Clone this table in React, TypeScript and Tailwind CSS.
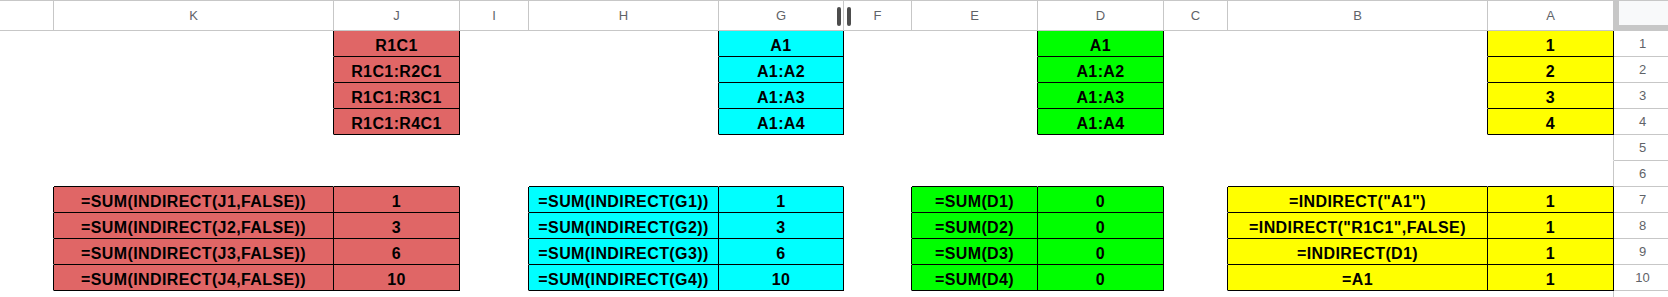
import React from "react";

type Fill = "red" | "cyan" | "green" | "yellow";

const COLS = ["L", "K", "J", "I", "H", "G", "F", "E", "D", "C", "B", "A"];

const FILL_CLASS: Record<Fill, string> = {
  red: "bg-[#e06666]",
  cyan: "bg-[#00ffff]",
  green: "bg-[#00ff00]",
  yellow: "bg-[#ffff00]",
};

const blocks: { col: string; start: number; fill: Fill; values: string[] }[] = [
  { col: "J", start: 1, fill: "red", values: ["R1C1", "R1C1:R2C1", "R1C1:R3C1", "R1C1:R4C1"] },
  { col: "G", start: 1, fill: "cyan", values: ["A1", "A1:A2", "A1:A3", "A1:A4"] },
  { col: "D", start: 1, fill: "green", values: ["A1", "A1:A2", "A1:A3", "A1:A4"] },
  { col: "A", start: 1, fill: "yellow", values: ["1", "2", "3", "4"] },
  {
    col: "K",
    start: 7,
    fill: "red",
    values: [
      "=SUM(INDIRECT(J1,FALSE))",
      "=SUM(INDIRECT(J2,FALSE))",
      "=SUM(INDIRECT(J3,FALSE))",
      "=SUM(INDIRECT(J4,FALSE))",
    ],
  },
  { col: "J", start: 7, fill: "red", values: ["1", "3", "6", "10"] },
  {
    col: "H",
    start: 7,
    fill: "cyan",
    values: ["=SUM(INDIRECT(G1))", "=SUM(INDIRECT(G2))", "=SUM(INDIRECT(G3))", "=SUM(INDIRECT(G4))"],
  },
  { col: "G", start: 7, fill: "cyan", values: ["1", "3", "6", "10"] },
  { col: "E", start: 7, fill: "green", values: ["=SUM(D1)", "=SUM(D2)", "=SUM(D3)", "=SUM(D4)"] },
  { col: "D", start: 7, fill: "green", values: ["0", "0", "0", "0"] },
  {
    col: "B",
    start: 7,
    fill: "yellow",
    values: ['=INDIRECT("A1")', '=INDIRECT("R1C1",FALSE)', "=INDIRECT(D1)", "=A1"],
  },
  { col: "A", start: 7, fill: "yellow", values: ["1", "1", "1", "1"] },
];

const cells = new Map<string, { text: string; fill: Fill }>();
blocks.forEach((b) =>
  b.values.forEach((text, i) => cells.set(`${b.col}${b.start + i}`, { text, fill: b.fill }))
);

const boxed = (col: string | undefined, row: number) => !!col && cells.has(`${col}${row}`);

const ROWS = Array.from({ length: 11 }, (_, i) => i + 1);

function HeaderCell({ col }: { col: string }) {
  return (
    <div className="relative h-[31px] border-t border-b border-r border-[#c7c7c7] bg-white flex items-center justify-center text-[13px] text-[#5f6368]">
      {col === "L" ? "" : col}
      {col === "G" && (
        <div className="absolute left-[118px] top-[6px] z-10 flex gap-[6px]">
          <div className="w-[4px] h-[19px] rounded-full bg-[#4d4d4d]" />
          <div className="w-[4px] h-[19px] rounded-full bg-[#4d4d4d]" />
        </div>
      )}
    </div>
  );
}

function Cell({ col, idx, row }: { col: string; idx: number; row: number }) {
  const data = cells.get(`${col}${row}`);
  const self = !!data;
  const right = COLS[idx + 1];
  const rightLine =
    self || boxed(right, row) ? "border-r-black" : idx === COLS.length - 1 ? "border-r-[#c7c7c7]" : "border-r-white";
  const bottomLine = self || boxed(col, row + 1) ? "border-b-black" : "border-b-white";
  return (
    <div
      className={`h-[26px] border-r border-b ${rightLine} ${bottomLine} ${
        data ? FILL_CLASS[data.fill] : "bg-white"
      } flex items-end justify-center overflow-hidden whitespace-nowrap pb-[1px] text-[16px] leading-[18px] font-bold tracking-[0.4px] text-black`}
    >
      {data?.text}
    </div>
  );
}

export default function App() {
  return (
    <div className="h-[297px] w-full overflow-hidden bg-white font-['Liberation_Sans',Arial,sans-serif]">
      <div className="grid w-max grid-cols-[54px_280px_126px_69px_190px_125px_68px_126px_126px_64px_260px_126px_57px]">
        {COLS.map((c) => (
          <HeaderCell key={c} col={c} />
        ))}
        {/* corner above the row numbers */}
        <div className="h-[31px] border-t border-[#c7c7c7] border-l-[5px] border-b-[6px] border-l-[#c7c7c7] border-b-[#c7c7c7] bg-[#f8f9fa]" />

        {ROWS.map((r) => (
          <React.Fragment key={r}>
            {COLS.map((c, i) => (
              <Cell key={c} col={c} idx={i} row={r} />
            ))}
            <div className="h-[26px] border-b border-[#c7c7c7] bg-white flex items-center justify-center pt-[1px] text-[13px] text-[#5f6368]">
              {r}
            </div>
          </React.Fragment>
        ))}
      </div>
    </div>
  );
}
